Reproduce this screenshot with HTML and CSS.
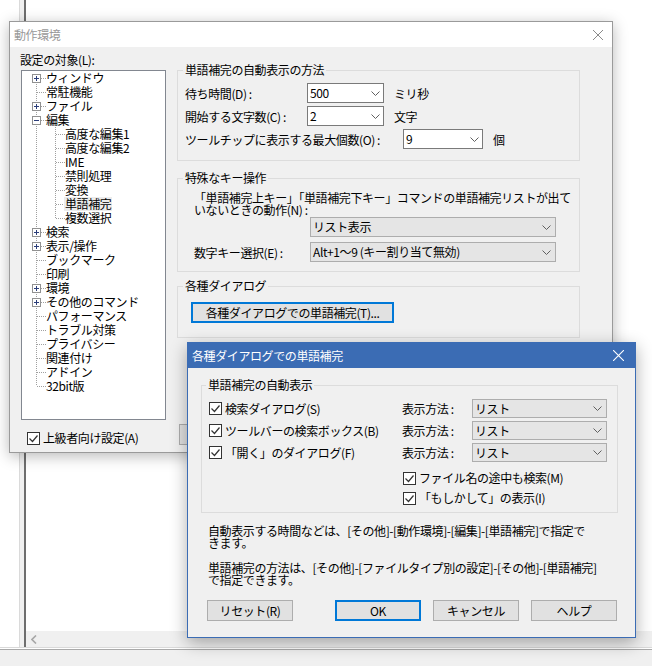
FILE: index.html
```html
<!DOCTYPE html>
<html lang="ja">
<head>
    <meta charset="UTF-8">
    <title>動作環境</title>
    <link rel="stylesheet" href="styles.css">
</head>
<body>
    <svg class="svg-defs" aria-hidden="true">
        <symbol id="ico-check" viewBox="0 0 13 13">
            <rect x="0.5" y="0.5" width="12" height="12" fill="#fff" stroke="#333"/>
            <path d="M2.5 6.5l3 3 5-6" fill="none" stroke="#333" stroke-width="1.2"/>
        </symbol>
        <symbol id="ico-chev" viewBox="0 0 9 5">
            <path d="M0.5 0.5l4 4 4-4" fill="none" stroke="#606060"/>
        </symbol>
        <symbol id="ico-plus" viewBox="0 0 9 9">
            <rect x="0.5" y="0.5" width="8" height="8" fill="#fff" stroke="#919191"/>
            <path d="M2 4.5h5M4.5 2v5" stroke="#2c3e7a"/>
        </symbol>
        <symbol id="ico-minus" viewBox="0 0 9 9">
            <rect x="0.5" y="0.5" width="8" height="8" fill="#fff" stroke="#919191"/>
            <path d="M2 4.5h5" stroke="#2c3e7a"/>
        </symbol>
        <symbol id="ico-close" viewBox="0 0 10 10">
            <path d="M0 0L10 10M10 0L0 10" fill="none" stroke="currentColor"/>
        </symbol>
        <symbol id="ico-left" viewBox="0 0 6 9">
            <path d="M5 0.5L1 4.5l4 4" fill="none" stroke="#a6a6a6" stroke-width="1.6"/>
        </symbol>
    </svg>

    <!-- editor behind the dialogs -->
    <div class="app">
        <div class="panes">
            <div class="side-pane"></div>
            <div class="splitter"></div>
            <div class="editor">
                <div class="editor-body"></div>
                <div class="hscroll">
                    <svg class="scroll-arrow"><use href="#ico-left"/></svg>
                </div>
            </div>
        </div>
        <div class="statusbar">
            <div class="statusbar-inner"></div>
        </div>
    </div>

    <!-- 動作環境 -->
    <div class="window dlg-options">
        <div class="titlebar">
            <span class="title">動作環境</span>
            <svg class="close-icon"><use href="#ico-close"/></svg>
        </div>
        <div class="dlg-body">
            <div class="options-main">
                <div class="nav-col">
                    <div class="field-label">設定の対象(L):</div>
                    <div class="tree">
                        <ul class="tree-root">
                            <li><div class="tree-row"><span class="twig"><svg class="expander"><use href="#ico-plus"/></svg><span class="twig-line"></span></span>ウィンドウ</div></li>
                            <li><div class="tree-row"><span class="twig leaf"><span class="twig-line"></span></span>常駐機能</div></li>
                            <li><div class="tree-row"><span class="twig"><svg class="expander"><use href="#ico-plus"/></svg><span class="twig-line"></span></span>ファイル</div></li>
                            <li>
                                <div class="tree-row"><span class="twig"><svg class="expander"><use href="#ico-minus"/></svg><span class="twig-line"></span></span>編集</div>
                                <ul class="tree-sub">
                                    <li><div class="tree-row"><span class="twig"><span class="twig-line"></span></span>高度な編集1</div></li>
                                    <li><div class="tree-row"><span class="twig"><span class="twig-line"></span></span>高度な編集2</div></li>
                                    <li><div class="tree-row"><span class="twig"><span class="twig-line"></span></span>IME</div></li>
                                    <li><div class="tree-row"><span class="twig"><span class="twig-line"></span></span>禁則処理</div></li>
                                    <li><div class="tree-row"><span class="twig"><span class="twig-line"></span></span>変換</div></li>
                                    <li><div class="tree-row"><span class="twig"><span class="twig-line"></span></span><span class="selected">単語補完</span></div></li>
                                    <li><div class="tree-row"><span class="twig"><span class="twig-line"></span></span>複数選択</div></li>
                                </ul>
                            </li>
                            <li><div class="tree-row"><span class="twig"><svg class="expander"><use href="#ico-plus"/></svg><span class="twig-line"></span></span>検索</div></li>
                            <li><div class="tree-row"><span class="twig"><svg class="expander"><use href="#ico-plus"/></svg><span class="twig-line"></span></span>表示/操作</div></li>
                            <li><div class="tree-row"><span class="twig leaf"><span class="twig-line"></span></span>ブックマーク</div></li>
                            <li><div class="tree-row"><span class="twig leaf"><span class="twig-line"></span></span>印刷</div></li>
                            <li><div class="tree-row"><span class="twig"><svg class="expander"><use href="#ico-plus"/></svg><span class="twig-line"></span></span>環境</div></li>
                            <li><div class="tree-row"><span class="twig"><svg class="expander"><use href="#ico-plus"/></svg><span class="twig-line"></span></span>その他のコマンド</div></li>
                            <li><div class="tree-row"><span class="twig leaf"><span class="twig-line"></span></span>パフォーマンス</div></li>
                            <li><div class="tree-row"><span class="twig leaf"><span class="twig-line"></span></span>トラブル対策</div></li>
                            <li><div class="tree-row"><span class="twig leaf"><span class="twig-line"></span></span>プライバシー</div></li>
                            <li><div class="tree-row"><span class="twig leaf"><span class="twig-line"></span></span>関連付け</div></li>
                            <li><div class="tree-row"><span class="twig leaf"><span class="twig-line"></span></span>アドイン</div></li>
                            <li><div class="tree-row"><span class="twig leaf"><span class="twig-line"></span></span>32bit版</div></li>
                        </ul>
                    </div>
                </div>

                <div class="settings-col">
                    <fieldset class="group">
                        <legend>単語補完の自動表示の方法</legend>
                        <div class="rows">
                            <div class="row">
                                <span class="row-label">待ち時間(D) :</span>
                                <div class="combo combo-short"><span>500</span><svg class="chev"><use href="#ico-chev"/></svg></div>
                                <span class="unit">ミリ秒</span>
                            </div>
                            <div class="row">
                                <span class="row-label">開始する文字数(C) :</span>
                                <div class="combo combo-short"><span>2</span><svg class="chev"><use href="#ico-chev"/></svg></div>
                                <span class="unit">文字</span>
                            </div>
                            <div class="row">
                                <span class="row-label row-label-long">ツールチップに表示する最大個数(O) :</span>
                                <div class="combo combo-count"><span>9</span><svg class="chev"><use href="#ico-chev"/></svg></div>
                                <span class="unit">個</span>
                            </div>
                        </div>
                    </fieldset>

                    <fieldset class="group group-keys">
                        <legend>特殊なキー操作</legend>
                        <div class="desc">「単語補完上キー」「単語補完下キー」コマンドの単語補完リストが出て<br>いないときの動作(N) :</div>
                        <div class="row row-indent row-first">
                            <div class="combo combo-list combo-wide"><span>リスト表示</span><svg class="chev"><use href="#ico-chev"/></svg></div>
                        </div>
                        <div class="row row-indent row-next">
                            <span class="row-label row-label-key">数字キー選択(E) :</span>
                            <div class="combo combo-list combo-wide"><span>Alt+1～9 (キー割り当て無効)</span><svg class="chev"><use href="#ico-chev"/></svg></div>
                        </div>
                    </fieldset>

                    <fieldset class="group group-dialogs">
                        <legend>各種ダイアログ</legend>
                        <button class="btn btn-wide is-default">各種ダイアログでの単語補完(T)...</button>
                    </fieldset>
                </div>
            </div>

            <div class="options-foot">
                <label class="check check-advanced"><svg class="check-box"><use href="#ico-check"/></svg>上級者向け設定(A)</label>
                <!-- only the left edge shows from under the second dialog -->
                <button class="btn" aria-label="OK"></button>
            </div>
        </div>
    </div>

    <!-- 各種ダイアログでの単語補完 -->
    <div class="window dlg-complete">
        <div class="titlebar titlebar-active">
            <span class="title">各種ダイアログでの単語補完</span>
            <svg class="close-icon"><use href="#ico-close"/></svg>
        </div>
        <div class="dlg2-body">
            <fieldset class="group group-auto">
                <legend>単語補完の自動表示</legend>
                <div class="rows">
                    <div class="row row-mode">
                        <label class="check check-target"><svg class="check-box"><use href="#ico-check"/></svg>検索ダイアログ(S)</label>
                        <span class="mode-label">表示方法 :</span>
                        <div class="combo combo-list combo-mode"><span>リスト</span><svg class="chev"><use href="#ico-chev"/></svg></div>
                    </div>
                    <div class="row row-mode">
                        <label class="check check-target"><svg class="check-box"><use href="#ico-check"/></svg>ツールバーの検索ボックス(B)</label>
                        <span class="mode-label">表示方法 :</span>
                        <div class="combo combo-list combo-mode"><span>リスト</span><svg class="chev"><use href="#ico-chev"/></svg></div>
                    </div>
                    <div class="row row-mode">
                        <label class="check check-target"><svg class="check-box"><use href="#ico-check"/></svg>「開く」のダイアログ(F)</label>
                        <span class="mode-label">表示方法 :</span>
                        <div class="combo combo-list combo-mode"><span>リスト</span><svg class="chev"><use href="#ico-chev"/></svg></div>
                    </div>
                </div>
                <div class="sub-checks">
                    <label class="check"><svg class="check-box"><use href="#ico-check"/></svg>ファイル名の途中も検索(M)</label>
                    <label class="check"><svg class="check-box"><use href="#ico-check"/></svg>「もしかして」の表示(I)</label>
                </div>
            </fieldset>

            <p class="note">自動表示する時間などは、[その他]-[動作環境]-[編集]-[単語補完]で指定で<br>きます。</p>
            <p class="note">単語補完の方法は、[その他]-[ファイルタイプ別の設定]-[その他]-[単語補完]<br>で指定できます。</p>

            <div class="dlg2-buttons">
                <button class="btn">リセット(R)</button>
                <div class="btn-group">
                    <button class="btn is-default">OK</button>
                    <button class="btn">キャンセル</button>
                    <button class="btn">ヘルプ</button>
                </div>
            </div>
        </div>
    </div>
</body>
</html>
```

FILE: styles.css
```css
body {
    margin: 0;
    width: 652px;
    height: 666px;
    overflow: hidden;
    position: relative;
    background-color: #fff;
    color: #000;
    font-family: "Noto Sans CJK JP", "Noto Sans", sans-serif;
    font-size: 12px;
    letter-spacing: -0.4px;
}

.svg-defs {
    position: absolute;
    width: 0;
    height: 0;
    overflow: hidden;
}

/* editor in the background */
.app {
    display: flex;
    flex-direction: column;
    height: 666px;
}

.panes {
    display: flex;
    height: 647px;
}

.side-pane {
    width: 19px;
    border-right: 1px solid #dadada;
}

.splitter {
    width: 4px;
    background-color: #f0f0f0;
    border-right: 2px solid #6e6e6e;
}

.editor {
    flex: 1;
    display: flex;
    flex-direction: column;
}

.editor-body {
    flex: 1;
}

.hscroll {
    height: 16px;
    background-color: #f0f0f0;
    display: flex;
    align-items: center;
    padding-left: 5px;
}

.scroll-arrow {
    width: 6px;
    height: 9px;
}

.statusbar {
    flex: 1;
    display: flex;
    flex-direction: column;
    border-top: 1px solid #d9d9d9;
    padding-top: 1px;
}

.statusbar-inner {
    flex: 1;
    border-top: 1px solid #a9a9a9;
    background-color: #f0f0f0;
}

/* windows */
.window {
    position: absolute;
    box-sizing: border-box;
    display: flex;
    flex-direction: column;
    background-color: #f0f0f0;
}

.titlebar {
    height: 25px;
    flex: none;
    display: flex;
    align-items: center;
    justify-content: space-between;
    background-color: #fff;
    color: #999;
    padding: 0 9px 0 4px;
}

.close-icon {
    width: 10px;
    height: 10px;
    color: #8a8a8a;
}

.titlebar-active {
    background-color: #3b6cb4;
    color: #fff;
    padding-right: 11px;
}

.titlebar-active .close-icon {
    width: 11px;
    height: 11px;
    color: #fff;
}

.dlg-options {
    left: 9px;
    top: 21px;
    width: 604px;
    height: 432px;
    border: 1px solid #9a9a9a;
    box-shadow: 0 3px 14px rgba(0, 0, 0, 0.28);
}

.dlg-body {
    flex: 1;
    padding: 6px 0 0 10px;
}

.options-main {
    display: flex;
    gap: 11px;
}

.nav-col {
    width: 146px;
}

.field-label {
    line-height: 14px;
}

/* tree */
.tree {
    margin: 3px 0 0 1px;
    width: 145px;
    height: 350px;
    box-sizing: border-box;
    border: 1px solid #828790;
    background-color: #fff;
    overflow: hidden;
}

.tree ul {
    list-style: none;
    margin: 0;
    padding: 0;
}

.tree-root {
    background: repeating-linear-gradient(to bottom, #a0a0a0 0 1px, transparent 1px 2px) 14px 7px / 1px calc(100% - 14px) no-repeat;
}

.tree-sub {
    background: repeating-linear-gradient(to bottom, #a0a0a0 0 1px, transparent 1px 2px) 33px 0 / 1px calc(100% - 7px) no-repeat;
}

.tree-row {
    display: flex;
    align-items: center;
    height: 14px;
    line-height: 14px;
    white-space: nowrap;
}

.twig {
    display: flex;
    align-items: center;
    flex: none;
    width: 24px;
    height: 14px;
    padding-left: 10px;
    box-sizing: border-box;
}

.twig.leaf {
    padding-left: 15px;
}

.tree-sub .twig {
    width: 43px;
    padding-left: 34px;
}

.twig-line {
    flex: 1;
    height: 0;
    border-top: 1px dotted #a0a0a0;
}

.expander {
    width: 9px;
    height: 9px;
    flex: none;
}

.selected {
    background-color: #ececec;
    padding: 0 1px;
    margin-left: -1px;
}

/* settings side */
.settings-col {
    width: 403px;
    margin-top: 10px;
}

.group {
    margin: 0;
    padding: 6px 7px 11px;
    border: 1px solid #dcdcdc;
    min-width: 0;
}

.group legend {
    padding: 0 2px;
    margin-left: -2px;
    line-height: 14px;
}

.rows {
    display: flex;
    flex-direction: column;
    gap: 3px;
}

.row {
    display: flex;
    align-items: center;
    height: 20px;
    white-space: nowrap;
}

.row-label {
    width: 122px;
    flex: none;
}

.row-label-long {
    width: 218px;
}

.unit {
    margin-left: 10px;
}

.combo {
    display: flex;
    align-items: center;
    justify-content: space-between;
    flex: none;
    box-sizing: border-box;
    height: 20px;
    border: 1px solid #7a7a7a;
    background-color: #fff;
    padding: 0 3px 0 2px;
    line-height: 18px;
}

.combo-list {
    background-color: #e5e5e5;
    border-color: #adadad;
    padding-right: 4px;
}

.chev {
    width: 9px;
    height: 5px;
    flex: none;
}

.combo-short {
    width: 77px;
}

.combo-count {
    width: 80px;
}

.combo-wide {
    width: 246px;
}

.combo-mode {
    width: 135px;
    height: 19px;
}

.group-keys {
    margin-top: 10px;
    padding-top: 7px;
    padding-bottom: 9px;
}

.desc {
    margin-left: 9px;
    line-height: 12px;
    white-space: nowrap;
}

.row-indent {
    margin-left: 9px;
}

.row-first {
    margin-top: 1px;
    padding-left: 116px;
}

.row-next {
    margin-top: 5px;
}

.row-label-key {
    width: 116px;
}

.group-dialogs {
    margin-top: 7px;
    padding-top: 9px;
    padding-bottom: 14px;
}

/* buttons */
.btn {
    box-sizing: border-box;
    width: 86px;
    height: 21px;
    padding: 0;
    border: 1px solid #adadad;
    background-color: #e1e1e1;
    color: #000;
    font: inherit;
    letter-spacing: inherit;
    line-height: 19px;
    white-space: nowrap;
}

.btn.is-default {
    border: 2px solid #0078d7;
    line-height: 17px;
}

.btn-wide {
    width: 203px;
    margin-left: 6px;
}

/* checkboxes */
.check {
    display: flex;
    align-items: center;
    gap: 3px;
    height: 14px;
    line-height: 14px;
    white-space: nowrap;
}

.check-box {
    width: 13px;
    height: 13px;
    flex: none;
}

.options-foot {
    display: flex;
    align-items: flex-start;
    gap: 12px;
    margin-top: 4px;
    padding-left: 7px;
}

.check-advanced {
    width: 140px;
    margin-top: 7px;
}

/* 各種ダイアログでの単語補完 */
.dlg-complete {
    left: 187px;
    top: 342px;
    width: 449px;
    height: 296px;
    border: 1px solid #3b6cb4;
    box-shadow: 0 5px 16px rgba(0, 0, 0, 0.32);
}

.dlg2-body {
    flex: 1;
    padding: 10px 0 0 13px;
}

.group-auto {
    width: 417px;
    box-sizing: border-box;
    padding: 7px 7px 6px;
}

.group-auto legend {
    margin-left: -3px;
}

.row-mode {
    height: 19px;
}

.check-target {
    width: 193px;
    flex: none;
}

.mode-label {
    width: 70px;
    flex: none;
}

.sub-checks {
    display: flex;
    flex-direction: column;
    gap: 4px;
    margin: 8px 0 0 194px;
}

.sub-checks .check {
    height: 16px;
}

.note {
    margin: 12px 0 0 7px;
    line-height: 12px;
    white-space: nowrap;
}

.note + .note {
    margin-top: 13px;
}

.dlg2-buttons {
    display: flex;
    justify-content: space-between;
    margin-top: 14px;
    padding: 0 18px 0 6px;
}

.btn-group {
    display: flex;
    gap: 12px;
}
```
